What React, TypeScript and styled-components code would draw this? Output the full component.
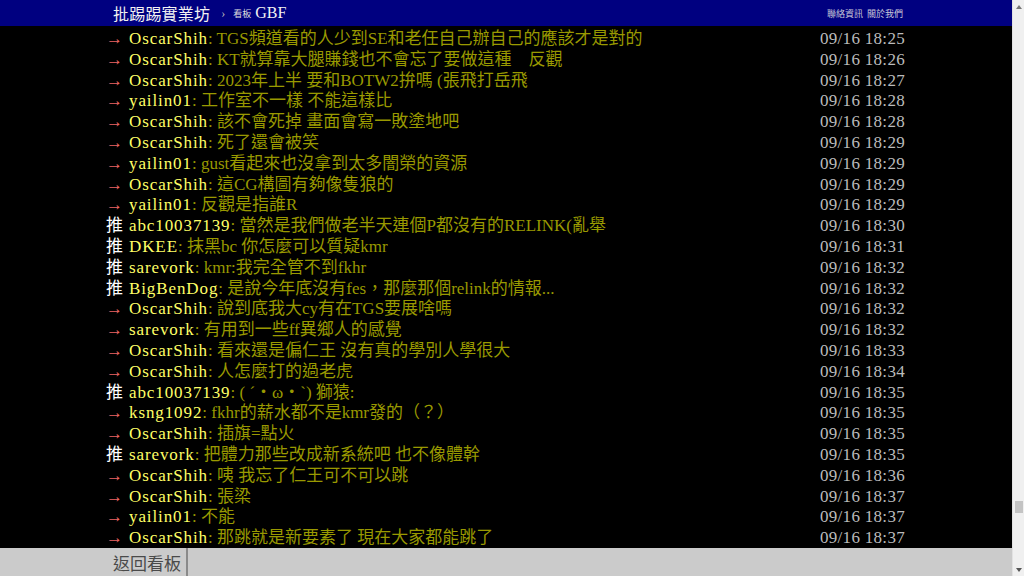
import React from 'react';
import styled, { createGlobalStyle } from 'styled-components';

const GlobalStyle = createGlobalStyle`
	html, body {
		margin: 0;
		padding: 0;
		height: 100%;
		overflow: hidden;
		background: #000;
	}
	body {
		font-family: "Liberation Serif", "Noto Sans CJK TC", serif;
	}
`;

const Shell = styled.div`
	display: flex;
	height: 100vh;
	width: 100vw;
`;
const Page = styled.div`
	display: flex;
	flex: 1;
	flex-direction: column;
	min-width: 0;
`;
const TopBar = styled.header`
	background: #000080;
	height: 26px;
	flex: none;
`;
const TopInner = styled.div`
	align-items: center;
	display: flex;
	height: 100%;
	margin: 0 auto;
	padding: 0 3px 0 7px;
	box-sizing: border-box;
	width: 800px;
`;
const Logo = styled.span`
	color: #f2f2f2;
	font-size: 16px;
	letter-spacing: 0.2px;
`;
const Crumb = styled.span`
	color: #bbb;
	font-size: 12px;
	margin: 0 8px 0 11px;
`;
const BoardLabel = styled.span`
	color: #ddd;
	font-size: 9px;
	margin-right: 4px;
`;
const BoardName = styled.span`
	color: #f2f2f2;
	font-size: 16px;
`;
const Links = styled.nav`
	color: #c8c8d8;
	display: flex;
	font-size: 9px;
	gap: 4px;
	margin-left: auto;
`;
const Main = styled.main`
	background: #000;
	flex: 1;
	overflow: hidden;
	padding-top: 3px;
`;
const Pushes = styled.div`
	margin: 0 auto;
	width: 800px;
`;
const Push = styled.div`
	display: flex;
	font-size: 17px;
	height: 20.8px;
	line-height: 20.8px;
	white-space: nowrap;
`;
const Tag = styled.span<{ $up: boolean }>`
	color: ${(p) => (p.$up ? '#fff' : '#e66')};
	display: inline-block;
	flex: none;
	width: 23px;
`;
const UserId = styled.span`
	color: #ff6;
	letter-spacing: 0.9px;
`;
const Content = styled.span`
	color: #990;
	flex: 1;
	overflow: hidden;
`;
const DateTime = styled.span`
	color: #bbb;
	flex: none;
	letter-spacing: 0.3px;
	padding-right: 1px;
`;
const Footer = styled.footer`
	background: #cbcbcb;
	flex: none;
	height: 28px;
`;
const FooterInner = styled.div`
	display: flex;
	height: 100%;
	margin: 0 auto;
	width: 800px;
`;
const BackButton = styled.a`
	align-items: center;
	border-right: 2px solid #8a8a8a;
	color: #4a4a4a;
	display: flex;
	font-size: 17px;
	padding: 0 5px 0 7px;
`;
const ScrollTrack = styled.div`
	background: #f0f0f0;
	border-left: 1px solid #e2e2e2;
	box-sizing: border-box;
	display: flex;
	flex-direction: column;
	align-items: center;
	width: 12px;
`;
const Arrow = styled.div<{ $down?: boolean }>`
	border-left: 3px solid transparent;
	border-right: 3px solid transparent;
	${(p) => (p.$down ? 'border-top: 4px solid #555;' : 'border-bottom: 4px solid #777;')}
	flex: none;
	height: 0;
	margin: ${(p) => (p.$down ? '0 0 4px' : '5px 0 0')};
	width: 0;
`;
const Thumb = styled.div`
	background: #c4c4c4;
	flex: none;
	height: 12px;
	width: 8px;
	margin-top: auto;
	margin-bottom: 55px;
`;

type Row = { up: boolean; user: string; text: string; time: string };

const rows: Row[] = [
	{ up: false, user: 'OscarShih', text: 'TGS頻道看的人少到SE和老任自己辦自己的應該才是對的', time: '09/16 18:25' },
	{ up: false, user: 'OscarShih', text: 'KT就算靠大腿賺錢也不會忘了要做這種　反觀', time: '09/16 18:26' },
	{ up: false, user: 'OscarShih', text: '2023年上半 要和BOTW2拚嗎 (張飛打岳飛', time: '09/16 18:27' },
	{ up: false, user: 'yailin01', text: '工作室不一樣 不能這樣比', time: '09/16 18:28' },
	{ up: false, user: 'OscarShih', text: '該不會死掉 畫面會寫一敗塗地吧', time: '09/16 18:28' },
	{ up: false, user: 'OscarShih', text: '死了還會被笑', time: '09/16 18:29' },
	{ up: false, user: 'yailin01', text: 'gust看起來也沒拿到太多闇榮的資源', time: '09/16 18:29' },
	{ up: false, user: 'OscarShih', text: '這CG構圖有夠像隻狼的', time: '09/16 18:29' },
	{ up: false, user: 'yailin01', text: '反觀是指誰R', time: '09/16 18:29' },
	{ up: true, user: 'abc10037139', text: '當然是我們做老半天連個P都沒有的RELINK(亂舉', time: '09/16 18:30' },
	{ up: true, user: 'DKEE', text: '抹黑bc 你怎麼可以質疑kmr', time: '09/16 18:31' },
	{ up: true, user: 'sarevork', text: 'kmr:我完全管不到fkhr', time: '09/16 18:32' },
	{ up: true, user: 'BigBenDog', text: '是說今年底沒有fes，那麼那個relink的情報...', time: '09/16 18:32' },
	{ up: false, user: 'OscarShih', text: '說到底我大cy有在TGS要展啥嗎', time: '09/16 18:32' },
	{ up: false, user: 'sarevork', text: '有用到一些ff異鄉人的感覺', time: '09/16 18:32' },
	{ up: false, user: 'OscarShih', text: '看來還是偏仁王 沒有真的學別人學很大', time: '09/16 18:33' },
	{ up: false, user: 'OscarShih', text: '人怎麼打的過老虎', time: '09/16 18:34' },
	{ up: true, user: 'abc10037139', text: '( ˊ・ω・ˋ) 獅猿:', time: '09/16 18:35' },
	{ up: false, user: 'ksng1092', text: 'fkhr的薪水都不是kmr發的（？）', time: '09/16 18:35' },
	{ up: false, user: 'OscarShih', text: '插旗=點火', time: '09/16 18:35' },
	{ up: true, user: 'sarevork', text: '把體力那些改成新系統吧 也不像體幹', time: '09/16 18:35' },
	{ up: false, user: 'OscarShih', text: '咦 我忘了仁王可不可以跳', time: '09/16 18:36' },
	{ up: false, user: 'OscarShih', text: '張梁', time: '09/16 18:37' },
	{ up: false, user: 'yailin01', text: '不能', time: '09/16 18:37' },
	{ up: false, user: 'OscarShih', text: '那跳就是新要素了 現在大家都能跳了', time: '09/16 18:37' },
];

const App: React.FC = () => {
	return (
		<>
			<GlobalStyle />
			<Shell>
				<Page>
					<TopBar>
						<TopInner>
							<Logo>批踢踢實業坊</Logo>
							<Crumb>›</Crumb>
							<BoardLabel>看板</BoardLabel>
							<BoardName>GBF</BoardName>
							<Links>
								<span>聯絡資訊</span>
								<span>關於我們</span>
							</Links>
						</TopInner>
					</TopBar>
					<Main>
						<Pushes>
							{rows.map((r, i) => (
								<Push key={i}>
									<Tag $up={r.up}>{r.up ? '推' : '→'}</Tag>
									<UserId>{r.user}</UserId>
									<Content>: {r.text}</Content>
									<DateTime>{r.time}</DateTime>
								</Push>
							))}
						</Pushes>
					</Main>
					<Footer>
						<FooterInner>
							<BackButton>返回看板</BackButton>
						</FooterInner>
					</Footer>
				</Page>
				<ScrollTrack>
					<Arrow />
					<Thumb />
					<Arrow $down />
				</ScrollTrack>
			</Shell>
		</>
	);
};

export default App;
